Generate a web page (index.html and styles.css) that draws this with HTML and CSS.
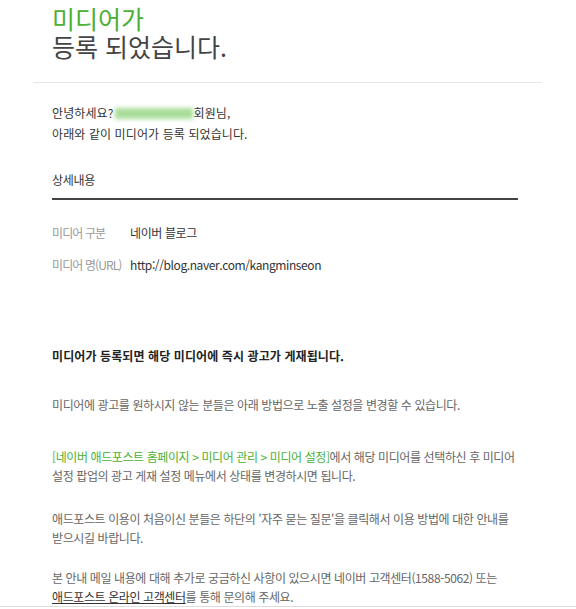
FILE: index.html
```html
<!DOCTYPE html>
<html lang="ko">
<head>
  <meta charset="UTF-8">
  <title>미디어 등록 안내</title>
  <link rel="stylesheet" href="styles.css">
</head>
<body>

  <div class="mail">
    <!-- Title -->
    <header class="mail-head">
      <h1><span class="green">미디어가</span><br>등록 되었습니다.</h1>
    </header>

    <div class="mail-body">
      <p class="greet">안녕하세요?<span class="blur"></span>회원님,<br>아래와 같이 미디어가 등록 되었습니다.</p>

      <!-- Details table -->
      <h2 class="detail-title">상세내용</h2>
      <dl class="detail">
        <div class="row">
          <dt>미디어 구분</dt>
          <dd>네이버 블로그</dd>
        </div>
        <div class="row">
          <dt>미디어 명(URL)</dt>
          <dd>http://blog.naver.com/kangminseon</dd>
        </div>
      </dl>

      <p class="notice">미디어가 등록되면 해당 미디어에 즉시 광고가 게재됩니다.</p>

      <p class="text p2">미디어에 광고를 원하시지 않는 분들은 아래 방법으로 노출 설정을 변경할 수 있습니다.</p>

      <p class="text p3"><span class="green">[네이버 애드포스트 홈페이지 &gt; 미디어 관리 &gt; 미디어 설정]</span>에서 해당 미디어를 선택하신 후 미디어<br>설정 팝업의 광고 게재 설정 메뉴에서 상태를 변경하시면 됩니다.</p>

      <p class="text p4">애드포스트 이용이 처음이신 분들은 하단의 '자주 묻는 질문'을 클릭해서 이용 방법에 대한 안내를<br>받으시길 바랍니다.</p>

      <p class="text p5">본 안내 메일 내용에 대해 추가로 궁금하신 사항이 있으시면 네이버 고객센터(1588-5062) 또는<br><a href="#" class="link">애드포스트 온라인 고객센터</a>를 통해 문의해 주세요.</p>
    </div>
  </div>

  <div class="page-line"></div>

</body>
</html>
```

FILE: styles.css
```css
/* base */
body {
  margin: 0;
  background: #fff;
  font-family: "Noto Sans CJK KR", "Noto Sans", sans-serif;
  font-size: 12px;
  color: #555;
}

.green {
  color: #4cb034;
}

/* mail box */
.mail {
  width: 509px;
  margin-left: 33px;
}

.mail-head {
  padding: 4px 0 22px 19px;
  border-bottom: 1px solid #e6e6e6;
}

.mail-head h1 {
  margin: 0;
  font-size: 25px;
  line-height: 28px;
  font-weight: normal;
  color: #444;
}

.mail-body {
  padding: 0 24px 0 19px;
}

/* greeting */
.greet {
  margin: 19px 0 0;
  line-height: 21px;
  color: #333;
  letter-spacing: 0.1px;
}

.blur {
  display: inline-block;
  width: 78px;
  height: 11px;
  margin: 0 1px;
  vertical-align: -1px;
  background: #a9dd9a;
  filter: blur(2px);
}

/* details */
.detail-title {
  margin: 26px 0 0;
  padding-bottom: 8px;
  border-bottom: 2px solid #444;
  font-size: 12px;
  line-height: 20px;
  font-weight: normal;
  color: #333;
  letter-spacing: -0.3px;
}

.detail {
  margin: 23px 0 0;
}

.detail .row {
  display: flex;
  line-height: 20px;
  margin-bottom: 12px;
}

.detail dt {
  width: 78px;
  color: #999;
  letter-spacing: -0.9px;
}

.detail dd {
  margin: 0;
  color: #333;
  letter-spacing: -0.4px;
}

/* notice texts */
.notice {
  margin: 71px 0 0;
  line-height: 20px;
  font-weight: bold;
  color: #222;
  letter-spacing: 0.1px;
}

.text {
  margin: 0;
  line-height: 19px;
  color: #666;
  letter-spacing: -0.4px;
}

.p2 {
  margin-top: 29px;
  line-height: 20px;
}

.p3 {
  margin-top: 32px;
}

.p4 {
  margin-top: 24px;
}

.p5 {
  margin-top: 21px;
}

.link {
  color: #333;
  text-decoration: underline;
}

.page-line {
  border-top: 1px solid #ddd;
}
```
